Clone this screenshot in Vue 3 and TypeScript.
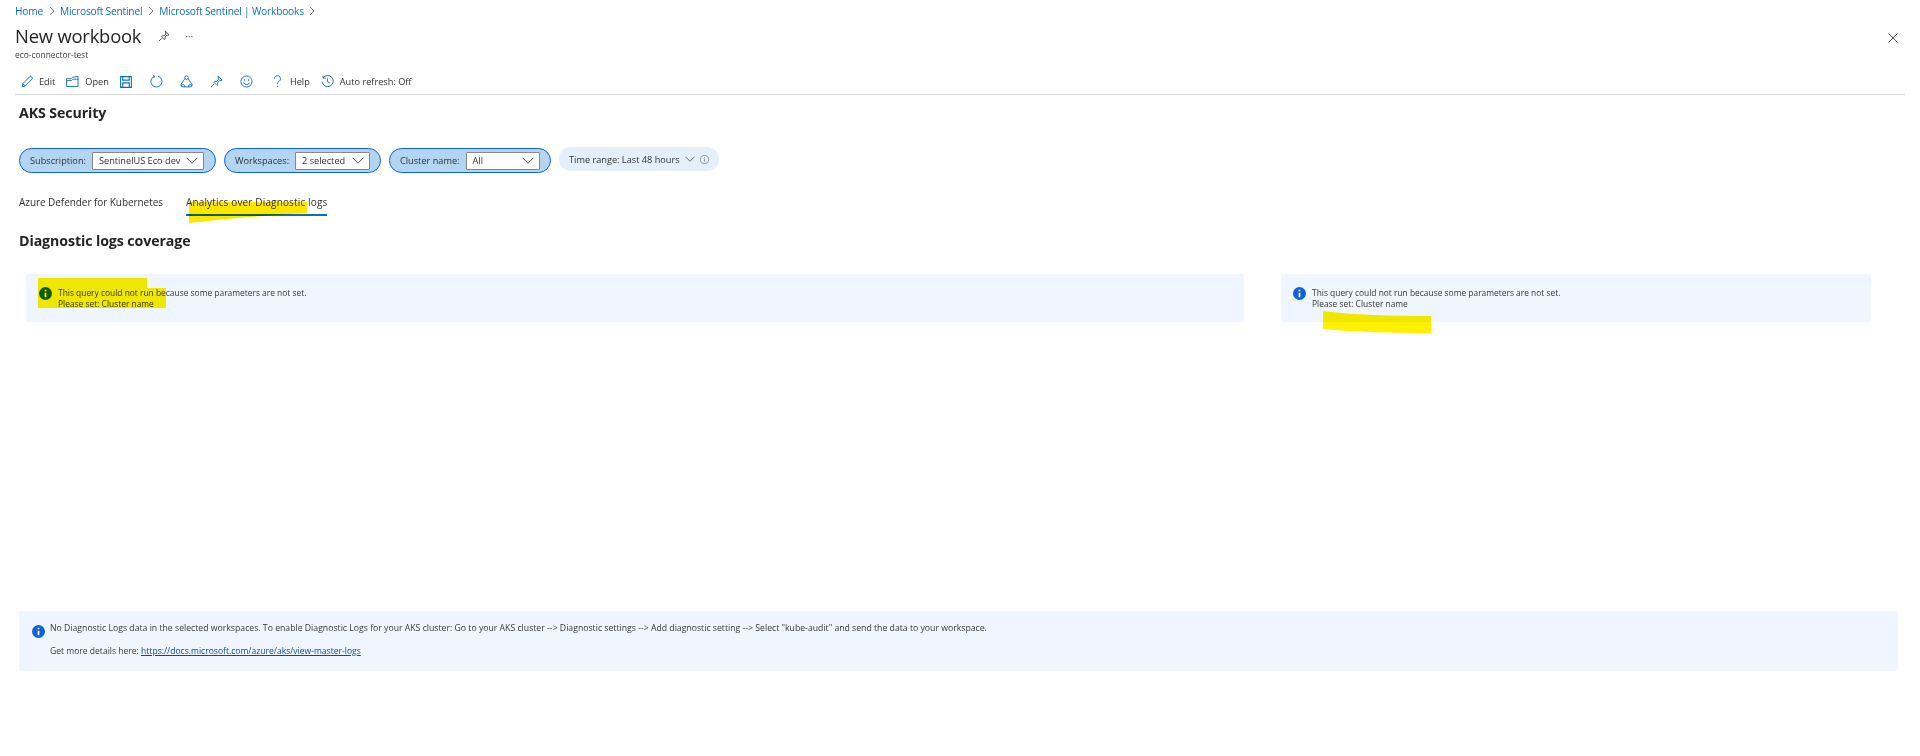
<script setup lang="ts">
const crumbs: string[] = ['Home', 'Microsoft Sentinel', 'Microsoft Sentinel | Workbooks']
const params = [
  { label: 'Subscription:', value: 'SentinelUS Eco dev', cls: 'p1' },
  { label: 'Workspaces:', value: '2 selected', cls: 'p2' },
  { label: 'Cluster name:', value: 'All', cls: 'p3' },
]
</script>

<template>
  <div class="page">
    <nav class="crumbs">
      <template v-for="c in crumbs" :key="c">
        <a class="crumb">{{ c }}</a>
        <svg class="sep" viewBox="0 0 8 10" width="8" height="10"><path d="M2 1l4 4-4 4" fill="none" stroke="#777" stroke-width="1" /></svg>
      </template>
    </nav>

    <header class="head">
      <div class="title-row">
        <h1 class="title">New workbook</h1>
        <svg class="pin-top" viewBox="0 0 12 12" width="12" height="12"><path d="M7.2 1l3.8 3.8-1 .6-1-.4-2 2 .2 1.8-.8.8-3-3 .8-.8 1.8.2 2-2-.4-1zM3.7 8.3L1 11" fill="none" stroke="#444" stroke-width=".9" /></svg>
        <span class="dots">···</span>
      </div>
      <svg class="close" viewBox="0 0 10 10" width="10" height="10"><path d="M.5.5l9 9M9.5.5l-9 9" stroke="#555" stroke-width="1" /></svg>
    </header>
    <div class="sub">eco-connector-test</div>

    <div class="toolbar">
      <span class="tool t-edit">
        <svg viewBox="0 0 14 14" width="13" height="13"><path d="M1.2 12.8l.8-3.4 7.4-7.6a1.3 1.3 0 0 1 1.9 0l.6.6a1.3 1.3 0 0 1 0 1.9l-7.5 7.6zM2 9.4l2.5 2.500" fill="none" stroke="#0f6cbd" stroke-width="1" /></svg>
        <span>Edit</span>
      </span>
      <span class="tool t-open">
        <svg viewBox="0 0 14 12" width="13" height="11"><path d="M.5 3h5l1.500-1.500 6-1V11.500H.5zM.5 5h5.500L7.500 3.500h5.800" fill="none" stroke="#0f6cbd" stroke-width="1" /></svg>
        <span>Open</span>
      </span>
      <span class="tool t-save">
        <svg viewBox="0 0 13 13" width="12" height="12"><path d="M.7.7h11.600v11.600H.7zM3 .7v3.800h7V.7M3 12.300V7.500h7v4.800" fill="none" stroke="#0f6cbd" stroke-width="1.200" /></svg>
      </span>
      <span class="tool t-refresh">
        <svg viewBox="0 0 14 14" width="13" height="13"><path d="M5 1.300a6 6 0 1 0 3.600-.1M5 1.300L3.300 .2M5 1.300L4 3.200" fill="none" stroke="#0f6cbd" stroke-width="1" /></svg>
      </span>
      <span class="tool t-share">
        <svg viewBox="0 0 14 14" width="13" height="13"><circle cx="7" cy="2.800" r="1.900" fill="none" stroke="#0f6cbd" /><path d="M5.400 3.900L1.300 9.600C.4 10.900 1.300 12.800 3 12.800H11C12.700 12.800 13.600 10.900 12.700 9.600L8.600 3.900" fill="none" stroke="#0f6cbd" stroke-width="1" /><path d="M4.900 12.800a1.900 1.900 0 1 0-3.800-.8M9.100 12.800a1.900 1.900 0 1 1 3.800-.8" fill="none" stroke="#0f6cbd" stroke-width="1" /></svg>
      </span>
      <span class="tool t-pin">
        <svg viewBox="0 0 14 14" width="13" height="13"><path d="M8.500 1l4.500 4.500-1.100.7-1.200-.5-2.400 2.400.2 2.200-1 .9-3.500-3.500 1-1 2.200.2 2.400-2.400-.5-1.200zM4.300 9.700L1 13" fill="none" stroke="#0f6cbd" stroke-width="1" /></svg>
      </span>
      <span class="tool t-smile">
        <svg viewBox="0 0 14 14" width="13" height="13"><circle cx="7" cy="7" r="6" fill="none" stroke="#0f6cbd" stroke-width="1" /><path d="M4 8.500a3.400 3.400 0 0 0 6 0" fill="none" stroke="#0f6cbd" /><circle cx="4.800" cy="5.300" r=".8" fill="#0f6cbd" /><circle cx="9.200" cy="5.300" r=".8" fill="#0f6cbd" /></svg>
      </span>
      <span class="tool t-help">
        <svg viewBox="0 0 10 14" width="9" height="13"><path d="M1.500 4a3.400 3.400 0 1 1 5.200 2.800C5.500 7.600 5 8.300 5 10M5 12v1.200" fill="none" stroke="#0f6cbd" stroke-width="1" /></svg>
        <span>Help</span>
      </span>
      <span class="tool t-auto">
        <svg viewBox="0 0 14 14" width="13" height="13"><path d="M2.200 3.200a6 6 0 1 1-1 4M2.200 .8v2.600h2.600M7 3.800V7l2.500 1.800" fill="none" stroke="#0f6cbd" stroke-width="1" /></svg>
        <span>Auto refresh: Off</span>
      </span>
    </div>

    <main class="content">
      <h2 class="h-aks">AKS Security</h2>

      <div class="params">
        <div v-for="p in params" :key="p.label" class="pill" :class="p.cls">
          <span class="plabel">{{ p.label }}</span>
          <span class="select">
            <span class="sval">{{ p.value }}</span>
            <svg viewBox="0 0 12 7" width="12" height="7"><path d="M.5.700L6 6.200 11.500.700" fill="none" stroke="#555" stroke-width="1" /></svg>
          </span>
        </div>
        <div class="time">
          <span>Time range: Last 48 hours</span>
          <svg viewBox="0 0 12 7" width="10" height="6"><path d="M.5.700L6 6.200 11.500.700" fill="none" stroke="#555" stroke-width="1" /></svg>
          <svg viewBox="0 0 10 10" width="9" height="9"><circle cx="5" cy="5" r="4.500" fill="none" stroke="#777" stroke-width=".8" /><path d="M5 4.300v3M5 2.500v1" stroke="#777" stroke-width=".8" /></svg>
        </div>
      </div>

      <div class="tabs">
        <span class="tab t-az">Azure Defender for Kubernetes</span>
        <span class="tab active">Analytics over Diagnostic logs
          <svg class="mark mark-tab" viewBox="0 0 120 24" preserveAspectRatio="none"><path d="M2 1H120V12C80 14 40 18 2 22z" /></svg>
        </span>
      </div>

      <h2 class="h-diag">Diagnostic logs coverage</h2>

      <div class="notes">
        <div class="note n-left">
          <svg class="info" viewBox="0 0 12 12" width="13" height="13"><circle cx="6" cy="6" r="6" fill="#0f62d6" /><path d="M6 5.200v4.200M6 2.500v1.500" stroke="#fff" stroke-width="1.600" /></svg>
          <div class="ntext">This query could not run because some parameters are not set.<br />Please set: Cluster name</div>
          <svg class="mark mark-left" viewBox="0 0 130 32" preserveAspectRatio="none"><path d="M1 1H110V11H129V31H1z" /></svg>
        </div>
        <div class="note n-right">
          <svg class="info" viewBox="0 0 12 12" width="13" height="13"><circle cx="6" cy="6" r="6" fill="#0f62d6" /><path d="M6 5.200v4.200M6 2.500v1.500" stroke="#fff" stroke-width="1.600" /></svg>
          <div class="ntext">This query could not run because some parameters are not set.<br />Please set: Cluster name</div>
          <svg class="mark mark-right" viewBox="0 0 108 22" preserveAspectRatio="none"><path d="M0 0C30 4 70 5 108 5V22C70 22 30 21 0 18z" /></svg>
        </div>
      </div>

      <div class="bottom">
        <svg class="info big" viewBox="0 0 12 12" width="13" height="13"><circle cx="6" cy="6" r="6" fill="#0f62d6" /><path d="M6 5.200v4.200M6 2.500v1.500" stroke="#fff" stroke-width="1.600" /></svg>
        <div class="btext">
          <p class="b1">No Diagnostic Logs data in the selected workspaces. To enable Diagnostic Logs for your AKS cluster: Go to your AKS cluster --&gt; Diagnostic settings --&gt; Add diagnostic setting --&gt; Select "kube-audit" and send the data to your workspace.</p>
          <p class="b2">Get more details here: <a class="link">https://docs.microsoft.com/azure/aks/view-master-logs</a></p>
        </div>
      </div>
    </main>
  </div>
</template>

<style>
html, body { margin: 0; background: #fff; }
</style>

<style scoped>
.page {
  width: 1920px;
  height: 756px;
  overflow: hidden;
  font-family: "Open Sans", "Noto Sans", sans-serif;
  color: #323130;
  box-sizing: border-box;
  padding-left: 15px;
}
.crumbs { display: flex; align-items: center; height: 22px; font-size: 10.2px; letter-spacing: -.2px; color: #0f6cbd; }
.crumb { white-space: nowrap; }
.sep { margin: 0 4.5px; }
.head { display: flex; align-items: center; justify-content: space-between; height: 26px; margin-top: 1px; padding-right: 22px; }
.title-row { display: flex; align-items: center; }
.title { margin: 0; font-size: 18.4px; letter-spacing: -.2px; font-weight: 400; line-height: 26px; color: #252423; }
.pin-top { margin-left: 17px; }
.dots { margin-left: 15px; font-size: 10px; color: #555; }
.close { margin-top: 4px; }
.sub { font-size: 8.4px; line-height: 12px; color: #444; }
.toolbar {
  display: flex;
  align-items: center;
  height: 30px;
  margin-right: 15px;
  margin-top: 4px;
  padding-top: 4px;
  box-sizing: border-box;
  border-bottom: 1px solid #d8d8d8;
  font-size: 9.2px;
}
.tool { display: flex; align-items: center; gap: 6px; white-space: nowrap; }
.t-edit { margin-left: 6px; gap: 5px; }
.t-open { margin-left: 11px; }
.t-save { margin-left: 11px; }
.t-refresh { margin-left: 18px; }
.t-share { margin-left: 17px; }
.t-pin { margin-left: 17px; }
.t-smile { margin-left: 17px; }
.t-help { margin-left: 20px; gap: 8px; }
.t-auto { margin-left: 11px; }
.content { padding-right: 15px; }
.h-aks { margin: 8px 0 0 4px; font-size: 14.2px; letter-spacing: -.1px; line-height: 20px; font-weight: 700; color: #252423; }
.params { display: flex; align-items: flex-start; margin: 25px 0 0 4px; }
.pill {
  display: flex;
  align-items: center;
  box-sizing: border-box;
  height: 25px;
  border: 1px solid #0f62d6;
  border-radius: 13px;
  background: #b3d5f2;
  font-size: 9.2px;
  padding: 0 10px;
  margin-right: 8px;
}
.plabel { white-space: nowrap; }
.select {
  display: flex;
  align-items: center;
  justify-content: space-between;
  box-sizing: border-box;
  height: 18px;
  margin-left: 7px;
  padding: 0 5px 0 6px;
  border: 1px solid #8a8886;
  background: #fff;
  border-radius: 1px;
  white-space: nowrap;
}
.p1 { width: 197px; }
.p1 .select { width: 112px; margin-left: 6px; }
.p2 { width: 157px; }
.p2 .select { width: 75px; margin-left: 6px; }
.p3 { width: 162px; }
.p3 .select { width: 75px; margin-left: 6px; }
.time {
  display: flex;
  align-items: center;
  gap: 5px;
  height: 24px;
  margin-top: -1px;
  padding: 0 10px;
  box-sizing: border-box;
  width: 160px;
  white-space: nowrap;
  border-radius: 12px;
  background: #e3f0fb;
  font-size: 9.2px;
}
.tabs { display: flex; margin: 21px 0 0 4px; font-size: 10px; line-height: 16px; }
.tab { position: relative; white-space: nowrap; padding-bottom: 4px; border-bottom: 2px solid transparent; }
.t-az { letter-spacing: -.06px; }
.tab.active { margin-left: 23px; letter-spacing: .15px; border-bottom-color: #0f6cbd; }
.mark { position: absolute; pointer-events: none; mix-blend-mode: multiply; }
.mark path { fill: #ffe600; }
.note .mark path { fill: #fff000; }
.mark-tab { left: 1px; top: 7px; width: 120px; height: 24px; }
.h-diag { margin: 15px 0 0 4px; font-size: 14.2px; letter-spacing: -.1px; line-height: 20px; font-weight: 700; color: #252423; }
.notes { display: flex; margin-top: 23px; }
.note {
  position: relative;
  display: flex;
  align-items: flex-start;
  box-sizing: border-box;
  height: 48px;
  padding: 13px 0 0 12px;
  border-radius: 2px;
  background: #eff6ff;
}
.n-left { width: 1218px; margin-left: 11px; padding-left: 13px; }
.n-right { width: 590px; margin-left: 37px; }
.info { flex: none; }
.ntext { margin-left: 6px; font-size: 8.42px; line-height: 11px; color: #3a3938; white-space: nowrap; }
.mark-left { left: 11px; top: 3px; width: 130px; height: 32px; }
.mark-right { left: 42px; top: 37px; width: 108px; height: 22px; }
.bottom {
  display: flex;
  box-sizing: border-box;
  width: 1879px;
  height: 60px;
  margin: 289px 0 0 4px;
  padding: 12px 0 0 13px;
  border-radius: 2px;
  background: #eff6ff;
}
.big { margin-top: 2px; }
.btext { margin-left: 5px; line-height: 11px; color: #3a3938; white-space: nowrap; }
.btext p { margin: 0 0 12px; }
.b1 { font-size: 8.7px; }
.b2 { font-size: 8.55px; }
.link { color: #0f4c81; text-decoration: underline; }
</style>
